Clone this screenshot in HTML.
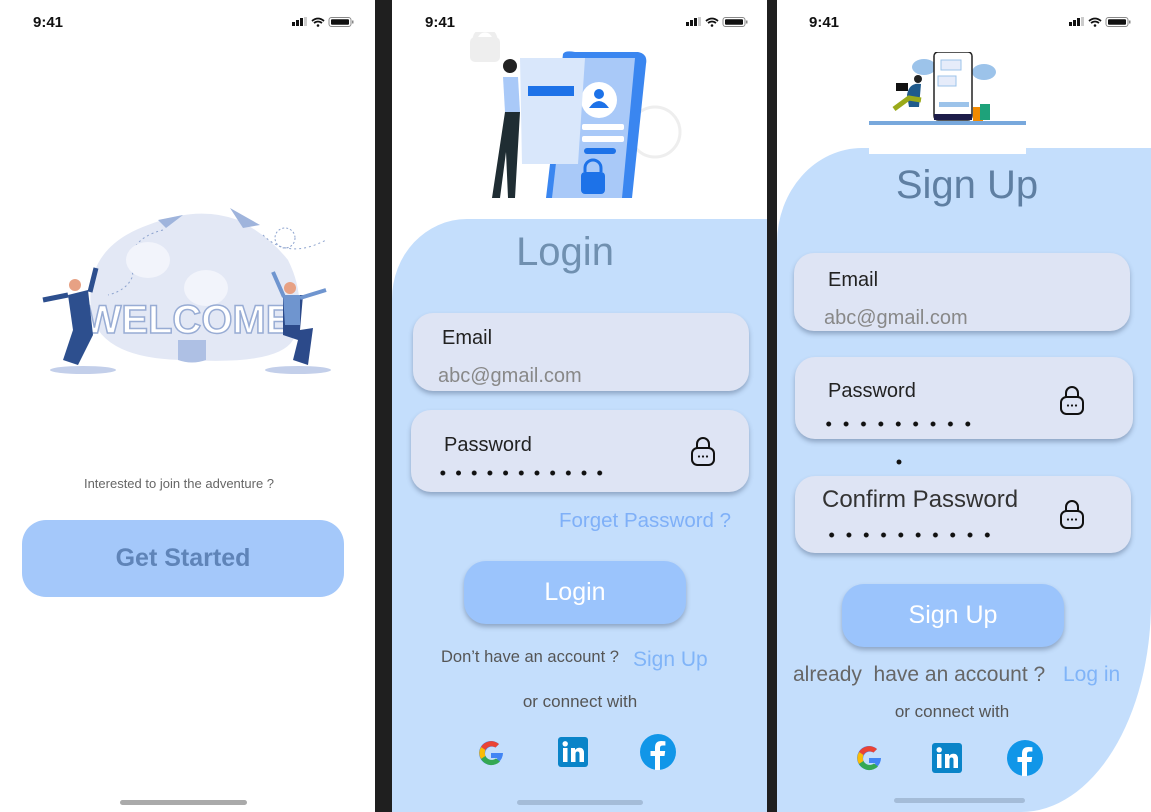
<!DOCTYPE html>
<html><head><meta charset="utf-8"><style>
*{margin:0;padding:0;box-sizing:border-box}
body{width:1151px;height:812px;background:#1f1f1f;position:relative;overflow:hidden;font-family:"Liberation Sans",sans-serif}
.s{position:absolute;top:0;height:812px;background:#fff;overflow:hidden}
.a{position:absolute;white-space:nowrap}
.time{font-size:15px;font-weight:bold;color:#111;top:14px}
.box{position:absolute;background:#dee4f4;border-radius:20px;box-shadow:0 3px 5px rgba(80,100,130,.45)}
.lbl{font-size:20px;color:#222}
.ph{font-size:20px;color:#888}
.dots{position:absolute;height:6px;background-image:radial-gradient(circle,#111 2.2px,transparent 2.7px);background-repeat:repeat-x}
.btn{position:absolute;background:#9bc4fc;border-radius:22px;box-shadow:0 3px 5px rgba(80,100,130,.45);color:#fff;font-size:25px;text-align:center}
.home{position:absolute;height:5px;border-radius:3px;background:#a4bcd8}
</style></head><body>
<svg width="0" height="0" style="position:absolute">
<defs>
<g id="st"><rect x="0" y="5" width="3" height="4" fill="#111"/><rect x="4" y="3" width="3" height="6" fill="#111"/><rect x="8" y="1" width="3" height="8" fill="#111"/><rect x="12" y="0" width="3" height="9" fill="#ccc"/>
<path d="M20 4 Q26 -1 32 4 M22 6 Q26 3 30 6" stroke="#111" stroke-width="1.8" fill="none"/><circle cx="26" cy="8.5" r="1.3" fill="#111"/>
<rect x="37" y="0.5" width="22" height="9" rx="2.5" fill="none" stroke="#888"/><rect x="39" y="2.2" width="18" height="5.6" rx="1" fill="#111"/><rect x="60" y="3.5" width="1.5" height="3" fill="#888"/></g>
<g id="lock"><path d="M7 13 V9 a6 6 0 0 1 12 0 V13" fill="none" stroke="#111" stroke-width="2"/><rect x="2" y="13" width="22" height="17" rx="5.5" fill="none" stroke="#111" stroke-width="2"/><circle cx="9" cy="21.5" r="1.1" fill="#111"/><circle cx="13" cy="21.5" r="1.1" fill="#111"/><circle cx="17" cy="21.5" r="1.1" fill="#111"/></g>
<g id="goo"><path d="M26 14 H14 V19 H20.5 A7 7 0 1 1 18.5 8.5 L22 5 A12 12 0 1 0 26 14Z" fill="#4285f4"/><path d="M4 8 A12 12 0 0 1 22 5 L18.5 8.5 A7 7 0 0 0 8.5 11Z" fill="#ea4335"/><path d="M4 8 L8.5 11 A7 7 0 0 0 8.5 17 L4 20 A12 12 0 0 1 4 8Z" fill="#fbbc05"/><path d="M4 20 L8.5 17 A7 7 0 0 0 19 19.5 L23 22.5 A12 12 0 0 1 4 20Z" fill="#34a853"/></g>
<g id="li"><rect x="0" y="0" width="30" height="30" rx="3" fill="#0a84c8"/><rect x="5" y="11" width="4.5" height="14" fill="#fff"/><circle cx="7.2" cy="6.8" r="2.7" fill="#fff"/><path d="M13 11 H17 V13 Q19 10.5 22 10.8 Q26 11 26 16 V25 H21.5 V17 Q21.5 14.5 19.5 14.5 Q17.5 14.5 17.5 17 V25 H13Z" fill="#fff"/></g>
<g id="fb"><circle cx="18" cy="18" r="18" fill="#1196e8"/><path d="M20 36 V22 H24.5 L25.2 17 H20 V14 Q20 11.5 22.8 11.5 H25.4 V7.3 Q23.5 7 21.5 7 Q15 7 15 13.5 V17 H10.5 V22 H15 V36Z" fill="#fff"/></g>
</defs></svg>

<!-- Screen 1 -->
<div class="s" style="left:0;width:375px">
<div class="a time" style="left:33px">9:41</div>
<svg class="a" style="left:292px;top:17px" width="62" height="11"><use href="#st"/></svg>
<svg class="a" style="left:38px;top:200px" width="300" height="178" viewBox="0 0 300 178">
<path d="M55 120 Q40 50 110 25 Q160 5 200 20 Q230 35 250 60 Q270 100 255 140 Q240 165 150 160 Q70 160 55 120Z" fill="#e3e8f5"/>
<path d="M120 20 L145 15 L128 28Z" fill="#9fb4dc"/><path d="M192 8 L222 25 L205 28Z" fill="#9fb4dc"/>
<path d="M125 30 Q85 40 95 75 Q90 90 70 95" stroke="#8ea4cf" stroke-dasharray="2 3" fill="none"/>
<path d="M225 35 Q250 60 288 40" stroke="#8ea4cf" stroke-dasharray="2 3" fill="none"/>
<circle cx="247" cy="38" r="10" fill="none" stroke="#8ea4cf" stroke-dasharray="2 2"/>
<ellipse cx="110" cy="60" rx="22" ry="18" fill="#f2f4fb"/><ellipse cx="168" cy="88" rx="22" ry="18" fill="#f2f4fb"/>
<path d="M140 140 h28 v20 q-14 5 -28 0z" fill="#aec0e4"/>
<text x="150" y="133" text-anchor="middle" font-family="Liberation Sans" font-weight="bold" font-size="40" fill="#fff" stroke="#98acd4" stroke-width="1.5">WELCOME</text>
<ellipse cx="45" cy="170" rx="33" ry="4" fill="#c3cfea"/><ellipse cx="260" cy="170" rx="33" ry="4" fill="#c3cfea"/>
<path d="M30 95 L50 90 L55 135 L40 165 L25 160 L35 130Z" fill="#2d4f8e"/><circle cx="37" cy="85" r="6" fill="#e7a184"/><path d="M30 95 L5 100 M52 92 L58 68" stroke="#2d4f8e" stroke-width="5"/>
<path d="M245 95 L265 95 L262 130 L275 128 L270 165 L255 160 L260 140 L245 135Z" fill="#2c4a8a"/><path d="M245 95 L262 95 L262 125 L247 125Z" fill="#6f95cf"/><circle cx="252" cy="88" r="6" fill="#e7a184"/><path d="M246 97 L235 72 M262 98 L288 90" stroke="#6f95cf" stroke-width="4"/>
</svg>
<div class="a" style="left:0;width:358px;text-align:center;top:476px;font-size:13px;color:#666">Interested to join the adventure ?</div>
<div class="btn" style="left:22px;top:520px;width:322px;height:77px;background:#a4c8fa;box-shadow:none;color:#5f84b8;font-weight:bold;font-size:25px;line-height:77px;border-radius:24px">Get Started</div>
<div class="home" style="left:120px;top:800px;width:127px;background:#aaa"></div>
</div>

<!-- Screen 2 -->
<div class="s" style="left:392px;width:375px">
<div class="a time" style="left:33px">9:41</div>
<svg class="a" style="left:294px;top:17px" width="62" height="11"><use href="#st"/></svg>
<svg class="a" style="left:68px;top:32px" width="240" height="168" viewBox="0 0 240 168">
<rect x="10" y="5" width="30" height="25" rx="5" fill="#eee"/><path d="M15 8 a10 10 0 0 1 20 0" stroke="#eee" stroke-width="5" fill="none"/>
<circle cx="195" cy="100" r="25" fill="none" stroke="#eee" stroke-width="3"/>
<path d="M103 22 Q105 18 115 20 L178 20 Q188 22 186 32 L172 166 L86 166Z" fill="#3a86f0"/>
<path d="M108 26 L175 26 L162 166 L92 166Z" fill="#a9c9f8"/>
<circle cx="139" cy="68" r="18" fill="#fff"/><circle cx="139" cy="62" r="5" fill="#1d72e8"/><path d="M129 76 q10 -14 20 0z" fill="#1d72e8"/>
<rect x="122" y="92" width="42" height="6" rx="2" fill="#fff"/><rect x="122" y="104" width="42" height="6" rx="2" fill="#fff"/><rect x="124" y="116" width="32" height="6" rx="3" fill="#1d72e8"/>
<rect x="121" y="140" width="24" height="22" rx="4" fill="#1d72e8"/><path d="M125 140 v-4 a8 8 0 0 1 16 0 v4" stroke="#1d72e8" stroke-width="3" fill="none"/>
<path d="M60 26 L125 26 L118 132 L62 132Z" fill="#d9e7fb"/><rect x="68" y="54" width="46" height="10" fill="#1d72e8"/>
<path d="M43 45 L58 45 L60 80 L45 80Z" fill="#a9c9f8"/><circle cx="50" cy="34" r="7" fill="#222"/>
<path d="M45 80 L60 80 L55 166 L48 166 L46 120 L40 166 L32 166Z" fill="#1f2d33"/>
</svg>
<div class="a" style="left:0;top:219px;width:375px;height:600px;background:#c4defc;border-top-left-radius:75px 80px"></div>
<div class="a" style="left:0;width:346px;text-align:center;top:230px;font-size:40px;color:#7090b0">Login</div>
<div class="box" style="left:21px;top:313px;width:336px;height:78px"></div>
<div class="a lbl" style="left:50px;top:327px">Email</div>
<div class="a ph" style="left:46px;top:365px">abc@gmail.com</div>
<div class="box" style="left:19px;top:410px;width:338px;height:82px"></div>
<div class="a lbl" style="left:52px;top:434px">Password</div>
<div class="dots" style="left:43px;top:470px;width:173px;background-size:15.7px 6px"></div>
<svg class="a" style="left:298px;top:435px" width="28" height="33"><use href="#lock"/></svg>
<div class="a" style="left:167px;top:509px;font-size:20.5px;color:#7fb0f8">Forget Password ?</div>
<div class="btn" style="left:72px;top:561px;width:222px;height:63px;line-height:63px">Login</div>
<div class="a" style="left:49px;top:648px;font-size:16.5px;color:#555">Don’t have an account ?</div>
<div class="a" style="left:241px;top:648px;font-size:21px;color:#80b4f8">Sign Up</div>
<div class="a" style="left:0;width:376px;text-align:center;top:692px;font-size:17px;color:#555">or connect with</div>
<svg class="a" style="left:85px;top:739px" width="28" height="28"><use href="#goo"/></svg>
<svg class="a" style="left:166px;top:737px" width="30" height="30"><use href="#li"/></svg>
<svg class="a" style="left:248px;top:734px" width="36" height="36"><use href="#fb"/></svg>
<div class="home" style="left:125px;top:800px;width:126px"></div>
</div>

<!-- Screen 3 -->
<div class="s" style="left:777px;width:374px">
<div class="a time" style="left:32px">9:41</div>
<svg class="a" style="left:292px;top:17px" width="62" height="11"><use href="#st"/></svg>
<div class="a" style="left:0;top:148px;width:374px;height:664px;background:#c4defc;border-top-left-radius:85px 95px;border-bottom-right-radius:130px 210px"></div>
<svg class="a" style="left:92px;top:52px" width="157" height="102" viewBox="0 0 157 102">
<rect width="157" height="102" fill="#fff"/>
<ellipse cx="55" cy="15" rx="12" ry="8" fill="#9cc3ea"/><ellipse cx="115" cy="20" rx="12" ry="8" fill="#9cc3ea"/>
<rect x="65" y="0" width="38" height="68" rx="4" fill="#fff" stroke="#222" stroke-width="1.5"/><rect x="72" y="8" width="20" height="10" fill="#e6ecfa" stroke="#9cc3ea"/><rect x="69" y="24" width="18" height="10" fill="#e6ecfa" stroke="#9cc3ea"/><rect x="70" y="50" width="30" height="5" fill="#9cc3ea"/><rect x="65" y="62" width="38" height="6" fill="#1d1d4a"/>
<path d="M38 43 Q40 30 52 32 L50 55 L40 55Z" fill="#1f5a8c"/><circle cx="49" cy="27" r="4" fill="#222"/><rect x="27" y="31" width="12" height="8" fill="#111"/><path d="M25 57 L40 46 L52 48" stroke="#9aaa1a" stroke-width="5" fill="none"/>
<rect x="104" y="55" width="10" height="14" fill="#f28a00"/><rect x="111" y="52" width="10" height="16" fill="#1ea27a"/>
<rect x="0" y="69" width="157" height="4" fill="#78a8dc"/>
</svg>
<div class="a" style="left:0;width:380px;text-align:center;top:163px;font-size:40px;color:#5f7fa2">Sign Up</div>
<div class="box" style="left:17px;top:253px;width:336px;height:78px"></div>
<div class="a lbl" style="left:51px;top:269px">Email</div>
<div class="a ph" style="left:47px;top:307px">abc@gmail.com</div>
<div class="box" style="left:18px;top:357px;width:338px;height:82px"></div>
<div class="a lbl" style="left:51px;top:380px">Password</div>
<div class="dots" style="left:43px;top:421px;width:157px;background-size:17.4px 6px"></div>
<svg class="a" style="left:282px;top:384px" width="28" height="33"><use href="#lock"/></svg>
<div class="dots" style="left:119px;top:459px;width:6px;background-size:6px 6px"></div>
<div class="box" style="left:18px;top:476px;width:336px;height:77px"></div>
<div class="a" style="left:45px;top:486px;font-size:24px;color:#333">Confirm Password</div>
<div class="dots" style="left:46px;top:532px;width:173px;background-size:17.3px 6px"></div>
<svg class="a" style="left:282px;top:498px" width="28" height="33"><use href="#lock"/></svg>
<div class="btn" style="left:65px;top:584px;width:222px;height:63px;line-height:63px">Sign Up</div>
<div class="a" style="left:16px;top:663px;font-size:21px;color:#666">already&nbsp; have an account ?</div>
<div class="a" style="left:286px;top:663px;font-size:21px;color:#80b4f8">Log in</div>
<div class="a" style="left:0;width:350px;text-align:center;top:702px;font-size:17px;color:#555">or connect with</div>
<svg class="a" style="left:78px;top:744px" width="28" height="28"><use href="#goo"/></svg>
<svg class="a" style="left:155px;top:743px" width="30" height="30"><use href="#li"/></svg>
<svg class="a" style="left:230px;top:740px" width="36" height="36"><use href="#fb"/></svg>
<div class="home" style="left:117px;top:798px;width:131px"></div>
</div>
</body></html>
